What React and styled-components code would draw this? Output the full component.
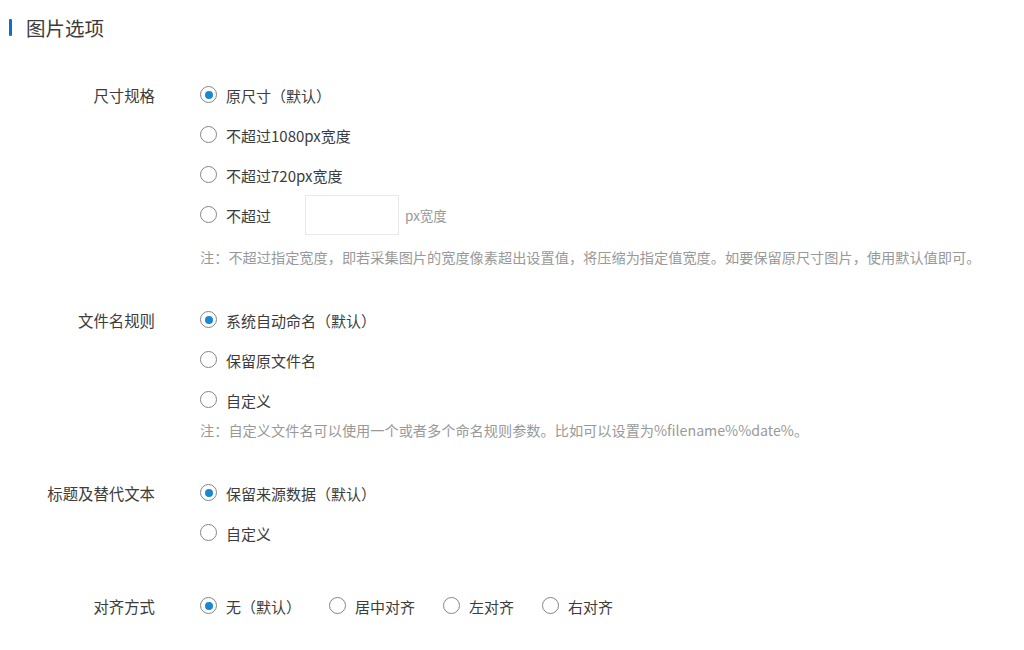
import React, { useState } from 'react'
import styled, { createGlobalStyle } from 'styled-components'

const GlobalStyle = createGlobalStyle`
  body {
    margin: 0;
    background: #fff;
    font-family: "Noto Sans CJK SC", "Noto Sans", sans-serif;
    color: #3c3c3c;
  }
`

const Page = styled.div`
  width: 1024px;
  height: 650px;
  overflow: hidden;
`

const Header = styled.h2`
  display: flex;
  align-items: center;
  gap: 14px;
  margin: 0;
  padding: 13px 0 0 9px;
  height: 29px;
  font-size: 19.5px;
  font-weight: 400;
  color: #3c3c3c;

  &::before {
    content: '';
    width: 3px;
    height: 17px;
    background: #0f6fcd;
    border-radius: 1px;
  }
`

const Form = styled.div`
  padding-top: 33px;
`

const Section = styled.div`
  display: grid;
  grid-template-columns: 155px 1fr;
  column-gap: 45px;
  margin-bottom: 33px;
`

const Label = styled.div`
  height: 40px;
  line-height: 40px;
  text-align: right;
  font-size: 15.4px;
  color: #3c3c3c;
`

const Options = styled.div`
  display: flex;
  flex-direction: column;
`

const Row = styled.div`
  display: flex;
  align-items: center;
  gap: ${p => p.$gap || 0}px;
  height: 40px;
`

const Choice = styled.label`
  display: inline-flex;
  align-items: center;
  gap: 9px;
  font-size: 15px;
  color: #3c3c3c;
  cursor: pointer;
  white-space: nowrap;

  input {
    display: none;
  }
`

const Circle = styled.span`
  box-sizing: border-box;
  width: 17px;
  height: 17px;
  border-radius: 50%;
  border: 1.5px solid #858585;
  display: flex;
  align-items: center;
  justify-content: center;
  flex-shrink: 0;
  margin-top: -1px;

  &::after {
    content: '';
    width: 8px;
    height: 8px;
    border-radius: 50%;
    background: ${p => (p.$checked ? '#1a88cf' : 'transparent')};
  }
`

const WidthInput = styled.input`
  box-sizing: border-box;
  width: 94px;
  height: 40px;
  margin-left: 34px;
  border: 1px solid #e8e8e8;
  outline: none;
  font-size: 14px;
  padding: 0 8px;
`

const Unit = styled.span`
  margin-left: 6px;
  font-size: 13.5px;
  color: #999;
`

const Note = styled.div`
  margin-top: ${p => p.$top || 0}px;
  height: 20px;
  line-height: 20px;
  font-size: 14.2px;
  color: #999;
  white-space: nowrap;
`

const Radio = ({ name, value, current, onPick, children }) => (
  <Choice>
    <input type="radio" name={name} checked={current === value} onChange={() => onPick(value)} />
    <Circle $checked={current === value} />
    {children}
  </Choice>
)

const App = () => {
  const [size, setSize] = useState('orig')
  const [fname, setFname] = useState('auto')
  const [alt, setAlt] = useState('keep')
  const [align, setAlign] = useState('none')

  return (
    <Page>
      <GlobalStyle />
      <Header>图片选项</Header>
      <Form>
        <Section>
          <Label>尺寸规格</Label>
          <Options>
            <Row><Radio name="size" value="orig" current={size} onPick={setSize}>原尺寸（默认）</Radio></Row>
            <Row><Radio name="size" value="1080" current={size} onPick={setSize}>不超过1080px宽度</Radio></Row>
            <Row><Radio name="size" value="720" current={size} onPick={setSize}>不超过720px宽度</Radio></Row>
            <Row>
              <Radio name="size" value="custom" current={size} onPick={setSize}>不超过</Radio>
              <WidthInput type="text" />
              <Unit>px宽度</Unit>
            </Row>
            <Note $top={12}>注：不超过指定宽度，即若采集图片的宽度像素超出设置值，将压缩为指定值宽度。如要保留原尺寸图片，使用默认值即可。</Note>
          </Options>
        </Section>

        <Section>
          <Label>文件名规则</Label>
          <Options>
            <Row><Radio name="fname" value="auto" current={fname} onPick={setFname}>系统自动命名（默认）</Radio></Row>
            <Row><Radio name="fname" value="orig" current={fname} onPick={setFname}>保留原文件名</Radio></Row>
            <Row><Radio name="fname" value="custom" current={fname} onPick={setFname}>自定义</Radio></Row>
            <Note>注：自定义文件名可以使用一个或者多个命名规则参数。比如可以设置为%filename%%date%。</Note>
          </Options>
        </Section>

        <Section>
          <Label>标题及替代文本</Label>
          <Options>
            <Row><Radio name="alt" value="keep" current={alt} onPick={setAlt}>保留来源数据（默认）</Radio></Row>
            <Row><Radio name="alt" value="custom" current={alt} onPick={setAlt}>自定义</Radio></Row>
          </Options>
        </Section>

        <Section>
          <Label>对齐方式</Label>
          <Options>
            <Row $gap={28}>
              <Radio name="align" value="none" current={align} onPick={setAlign}>无（默认）</Radio>
              <Radio name="align" value="center" current={align} onPick={setAlign}>居中对齐</Radio>
              <Radio name="align" value="left" current={align} onPick={setAlign}>左对齐</Radio>
              <Radio name="align" value="right" current={align} onPick={setAlign}>右对齐</Radio>
            </Row>
          </Options>
        </Section>
      </Form>
    </Page>
  )
}

export default App
